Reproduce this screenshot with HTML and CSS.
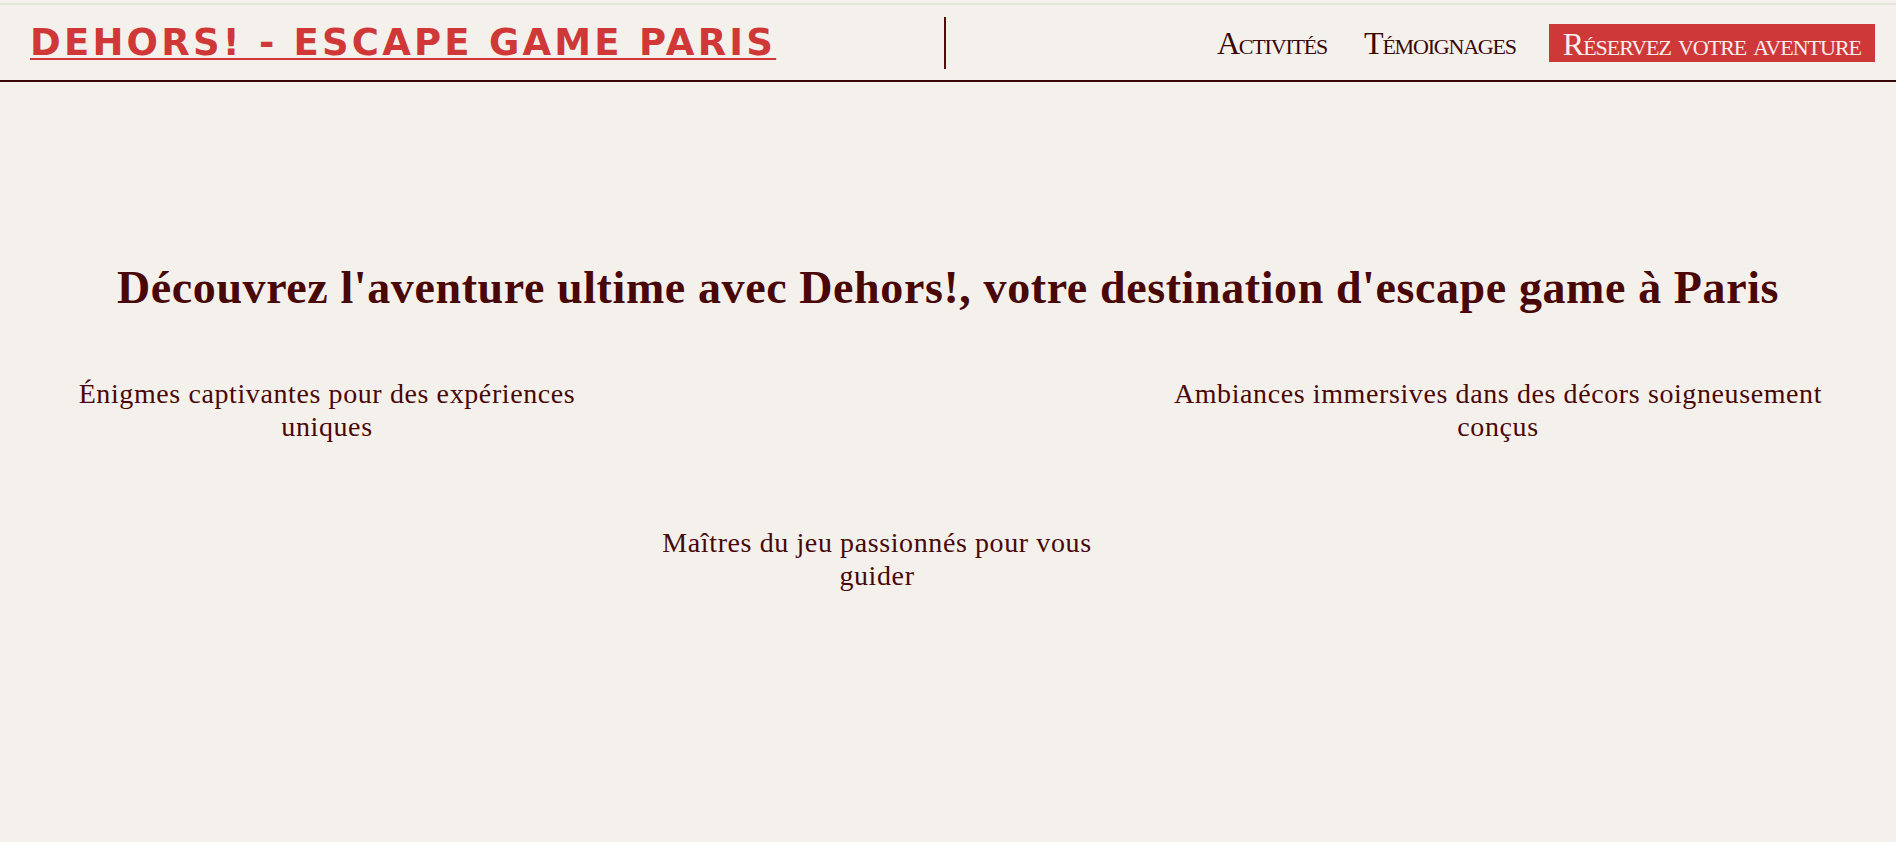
FILE: index.html
```html
<!DOCTYPE html>
<html lang="fr">
<head>
<meta charset="utf-8">
<title>Dehors! - Escape Game Paris</title>
<link rel="stylesheet" href="styles.css">
</head>
<body>
<div class="topband"></div>
<header class="site-header">
  <div class="brand-cell">
    <a class="brand" href="#">DEHORS! - ESCAPE GAME PARIS</a>
  </div>
  <nav class="nav">
    <a class="nav-link" href="#">Activités</a>
    <a class="nav-link" href="#">Témoignages</a>
    <a class="nav-cta" href="#">Réservez votre aventure</a>
  </nav>
</header>
<main class="hero">
  <h1 class="hero-title">Découvrez l'aventure ultime avec Dehors!, votre destination d'escape game à Paris</h1>
  <ul class="features">
    <li class="feature f1">Énigmes captivantes pour des expériences uniques</li>
    <li class="feature f3">Ambiances immersives dans des décors soigneusement conçus</li>
    <li class="feature f2">Maîtres du jeu passionnés pour vous guider</li>
  </ul>
</main>
</body>
</html>
```
FILE: styles.css
```css
* { box-sizing: border-box; }
html, body { margin: 0; padding: 0; }
body {
  background: #f4f1ec;
  color: #4a0707;
  font-family: "Liberation Serif", "DejaVu Serif", serif;
  min-height: 842px;
}
.topband {
  height: 5px;
  border-top: 3px solid #f4f1ec;
  background: #e3e7da;
}
.site-header {
  display: grid;
  grid-template-columns: 946px 1fr;
  align-items: center;
  height: 77px;
  border-bottom: 2px solid #3a0808;
}
.brand-cell {
  height: 52px;
  display: flex;
  align-items: center;
  padding-left: 30px;
  border-right: 2px solid #5a0a0a;
}
.brand {
  font-family: "DejaVu Sans", "Liberation Sans", sans-serif;
  font-weight: bold;
  font-size: 37px;
  color: #d03838;
  text-decoration: underline;
  text-decoration-thickness: 2px;
  text-underline-offset: 3px;
  letter-spacing: 3.2px;
}
.nav {
  display: flex;
  justify-content: flex-end;
  align-items: center;
  gap: 37px;
  padding-right: 21px;
}
.nav-link, .nav-cta {
  font-family: "Liberation Serif", "DejaVu Serif", serif;
  font-variant: small-caps;
  text-decoration: none;
  font-size: 32px;
  letter-spacing: -1.2px;
  line-height: 1;
}
.nav-link { color: #3a0808; }
.nav-cta {
  background: #cf3838;
  color: #f7eeee;
  letter-spacing: -1px;
  padding: 4px 14px 2px 14px;
  height: 38px;
  display: flex;
  align-items: center;
  margin-left: -4px;
}
.hero {
  padding: 178px 40px 0;
}
.hero-title {
  margin: 0;
  text-align: center;
  font-size: 46px;
  letter-spacing: 0.6px;
  font-weight: bold;
  line-height: 1.2;
}
.features {
  list-style: none;
  margin: 62px 0 0;
  padding: 0;
  display: grid;
  grid-template-columns: 574fr 526fr 716fr;
  row-gap: 83px;
}
.feature {
  text-align: center;
  font-size: 28px;
  letter-spacing: 0.6px;
  line-height: 33px;
  padding: 0 20px;
}
.f1 { grid-column: 1; grid-row: 1; }
.f3 { grid-column: 3; grid-row: 1; }
.f2 { grid-column: 2; grid-row: 2; }
```
